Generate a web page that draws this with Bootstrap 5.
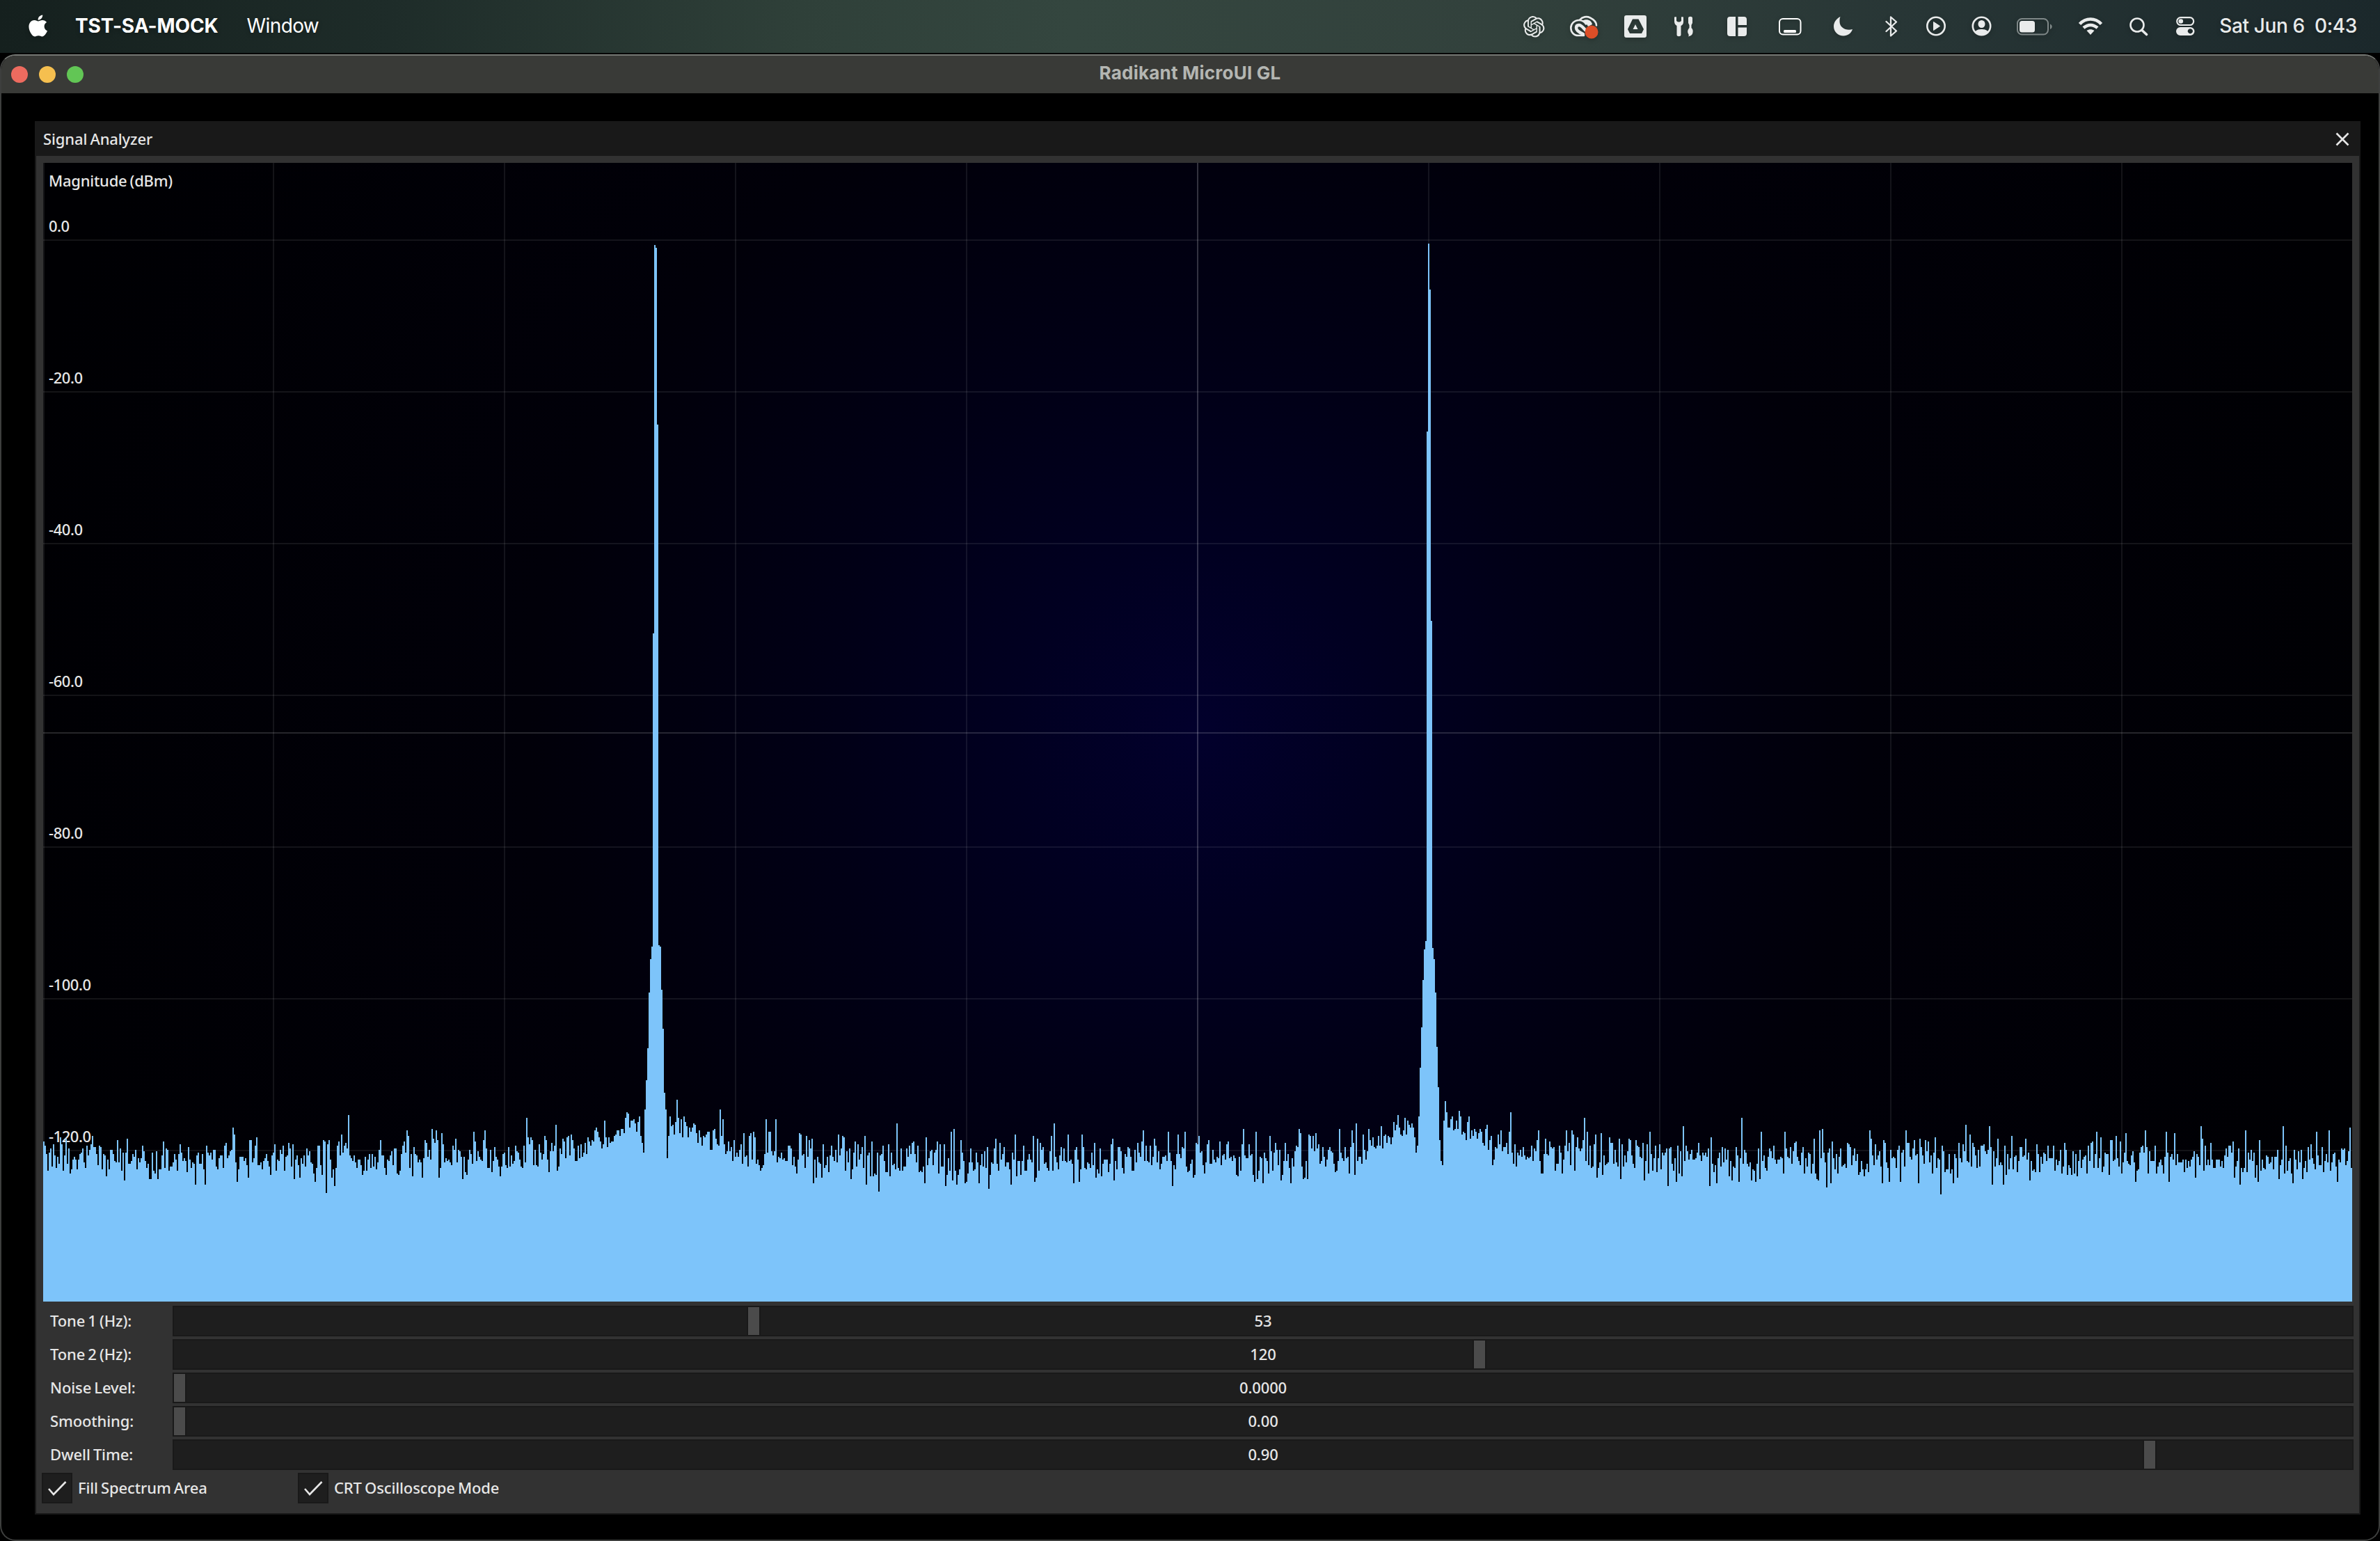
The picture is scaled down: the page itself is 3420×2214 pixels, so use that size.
<!DOCTYPE html>
<html lang="en" data-bs-theme="dark">
<head>
<meta charset="utf-8">
<title>Radikant MicroUI GL</title>
<link href="https://cdn.jsdelivr.net/npm/bootstrap@5.3.0/dist/css/bootstrap.min.css" rel="stylesheet">
<style>
  body { width: 3420px; height: 2214px; background: #000; overflow: hidden; font-family: Inter, "Liberation Sans", sans-serif; }
  .menubar { height: 76px; padding: 0 33px 0 37px; background: linear-gradient(90deg, #15201e 0, #1e2c29 560px, #2f4039 1150px, #34463f 1540px, #32413c 2160px, #273535 2780px, #1b282b 3420px); color: #fff; font-size: 28px; line-height: 1; text-shadow: 0 2px 6px rgba(0,0,0,.25); }
  .menubar span { padding-bottom: 3px; }
  .menubar svg { display: block; flex: none; overflow: visible; fill: #e9ebeb; filter: drop-shadow(0 2px 3px rgba(0,0,0,.25)); }
  .menubar svg .ln { fill: none; stroke: #e9ebeb; stroke-width: 2.6; stroke-linecap: round; stroke-linejoin: round; }
  .apple { margin-right: 35px; }
  .appname { font-weight: 700; letter-spacing: -.12px; margin-right: 41px; }
  .menu-item { letter-spacing: -.6px; }
  .clock { color: #e9ebeb; font-weight: 500; white-space: pre; letter-spacing: -.37px; margin-left: -1px; }
  .os-window { margin-top: 2px; height: 2136px; border: 2px solid #3e3f3e; border-top-color: #757874; border-radius: 22px; background: #000; overflow: hidden; }
  .titlebar { height: 54px; background: #393a37; color: #b4b6b2; font-size: 26px; font-weight: 700; line-height: 1; }
  .window-name { padding-bottom: 4px; letter-spacing: .22px; }
  .lights { width: 160px; padding-left: 14px; gap: 16px; }
  .lights i { width: 24px; height: 24px; border-radius: 50%; }
  .light-close { background: #ed6b5f; }
  .light-min { background: #f5bf4f; }
  .light-max { background: #62c655; }
  .panel { margin: 40px 26px 0 48px; height: 2002px; border: 2px solid #191919; background: #323232; color: #e6e6e6; font: 500 22px/1 "Noto Sans", "Open Sans", sans-serif; word-spacing: -1.4px; letter-spacing: -.13px; }
  .panel span:not(.tick) { padding-bottom: 2px; }
  .panel-title { height: 48px; background: #191919; padding: 0 14px 0 10px; }
  .plot { display: block; margin: 10px 0 6px 10px; }
  .plot text { font-size: 22px; fill: #e6e6e6; }
  .controls { padding: 0 8px 0 20px; gap: 4px; }
  .slider-label { width: 176px; }
  .slider { height: 44px; border: 2px solid #191919; background: #1e1e1e; }
  .slider > * { grid-area: 1 / 1; }
  .thumb { width: 20px; height: 40px; margin-left: calc((100% - 16px) * var(--v) - 2px); background: #4b4b4b; border: solid #191919; border-width: 0 2px; }
  .checks { padding: 4px 8px 0; }
  .checks > div { width: 368px; gap: 8px; }
  .tick { width: 44px; height: 44px; border: 2px solid #191919; background: #1e1e1e; }
  .tick svg, .closer { fill: none; stroke: #e6e6e6; stroke-width: 2.6; }
</style>
<script src="https://cdn.jsdelivr.net/npm/bootstrap@5.3.0/dist/js/bootstrap.bundle.min.js"></script>
</head>
<body>
<nav class="menubar d-flex align-items-center">
  <svg class="apple" width="36" height="76"><path transform="translate(1.4 21.5) scale(1.36 1.29)" fill="#fff" d="M12.152 6.896c-.948 0-2.415-1.078-3.96-1.04-2.04.027-3.91 1.183-4.961 3.014-2.117 3.675-.546 9.103 1.519 12.09 1.013 1.454 2.208 3.09 3.792 3.039 1.52-.065 2.09-.987 3.935-.987 1.831 0 2.35.987 3.96.948 1.637-.026 2.676-1.48 3.676-2.948 1.156-1.688 1.636-3.325 1.662-3.415-.039-.013-3.182-1.221-3.22-4.857-.026-3.04 2.48-4.494 2.597-4.559-1.429-2.09-3.623-2.324-4.39-2.376-2-.156-3.675 1.09-4.61 1.09zM15.53 3.83c.843-1.012 1.4-2.427 1.245-3.83-1.207.052-2.662.805-3.532 1.818-.78.896-1.454 2.338-1.273 3.714 1.338.104 2.715-.688 3.559-1.701"/></svg>
  <span class="appname">TST-SA-MOCK</span>
  <span class="menu-item">Window</span>
  <div class="d-flex align-items-center ms-auto">
    <svg width="67" height="76"><path transform="translate(0 23) scale(1.27)" d="M22.2819 9.8211a5.9847 5.9847 0 0 0-.5157-4.9108 6.0462 6.0462 0 0 0-6.5098-2.9A6.0651 6.0651 0 0 0 4.9807 4.1818a5.9847 5.9847 0 0 0-3.9977 2.9 6.0462 6.0462 0 0 0 .7427 7.0966 5.98 5.98 0 0 0 .511 4.9107 6.051 6.051 0 0 0 6.5146 2.9001A5.9847 5.9847 0 0 0 13.2599 24a6.0557 6.0557 0 0 0 5.7718-4.2058 5.9894 5.9894 0 0 0 3.9977-2.9001 6.0557 6.0557 0 0 0-.7475-7.0729zm-9.022 12.6081a4.4755 4.4755 0 0 1-2.8764-1.0408l.1419-.0804 4.7783-2.7582a.7948.7948 0 0 0 .3927-.6813v-6.7369l2.02 1.1686a.071.071 0 0 1 .038.052v5.5826a4.504 4.504 0 0 1-4.4945 4.4944zm-9.6607-4.1254a4.4708 4.4708 0 0 1-.5346-3.0137l.142.0852 4.783 2.7582a.7712.7712 0 0 0 .7806 0l5.8428-3.3685v2.3324a.0804.0804 0 0 1-.0332.0615L9.74 19.9502a4.4992 4.4992 0 0 1-6.1408-1.6464zM2.3408 7.8956a4.485 4.485 0 0 1 2.3655-1.9728V11.6a.7664.7664 0 0 0 .3879.6765l5.8144 3.3543-2.0201 1.1685a.0757.0757 0 0 1-.071 0l-4.8303-2.7865A4.504 4.504 0 0 1 2.3408 7.872zm16.5963 3.8558L13.1038 8.364 15.1192 7.2a.0757.0757 0 0 1 .071 0l4.8303 2.7913a4.4944 4.4944 0 0 1-.6765 8.1042v-5.6772a.79.79 0 0 0-.407-.667zm2.0107-3.0231l-.142-.0852-4.7735-2.7818a.7759.7759 0 0 0-.7854 0L9.409 9.2297V6.8974a.0662.0662 0 0 1 .0284-.0615l4.8303-2.7866a4.4992 4.4992 0 0 1 6.6802 4.66zM8.3065 12.863l-2.02-1.1638a.0804.0804 0 0 1-.038-.0567V6.0742a4.4992 4.4992 0 0 1 7.3757-3.4537l-.142.0805L8.704 5.459a.7948.7948 0 0 0-.3927.6813zm1.0976-2.3654l2.602-1.4998 2.6069 1.4998v2.9994l-2.5974 1.4997-2.6067-1.4997Z"/></svg>
    <svg width="78" height="76"><g class="ln"><path d="M14 28.5C18 24 24 23 29 25.5c5 2.500 9 6 9 11"/><path d="M20 51H12C5 51 1.300 45.500 1.300 40S6 29 13 29c5 0 8 2.500 10 5.500"/><path style="stroke-width:4.500" d="M19 49c-7-3-10-5.500-10-9 0-3 2-4 4-4 3.500 0 6 4 9.500 7.500"/></g><path d="M17 30c7-4 14-1 15 5l-6 3c-2-4-5-6-9-8z"/><circle cx="31" cy="46" r="9.500" fill="#dd4e27"/></svg>
    <svg width="72" height="76"><path fill-rule="evenodd" d="M3 22h26a3 3 0 0 1 3 3v26a3 3 0 0 1-3 3H3a3 3 0 0 1-3-3V25a3 3 0 0 1 3-3zM12 27.500L5 42l3 6h17l3-6-7.500-14.500zM16 35l3.500 7h-7z"/></svg>
    <svg width="76" height="76"><path d="M0 24.500c0 0 2-.8 3 0v5.500l2 1.500h3l2-1.500v-5.500c1-.8 3 0 3 0v7c0 3-1.500 4.500-3.500 5.500v13c0 3-6 3-6 0V37C1.500 36 0 34 0 31zM20 26c0-3 6-3 6 0v7l-1.500 3v4c2 2 2.500 4 2 6.500-.3 3-2 5-6.500 6 1.500-2 .5-3-.5-5-1-2.500 0-5.500 2-7.500v-4L20 33z"/></svg>
    <svg width="74" height="76"><path d="M4 24h8v28H4a4 4 0 0 1-4-4V28a4 4 0 0 1 4-4zM15.500 24H24a4 4 0 0 1 4 4v8H15.500zM15.500 39.500H28V48a4 4 0 0 1-4 4h-8.500z"/></svg>
    <svg width="79" height="76"><rect class="ln" x="1" y="27" width="30.500" height="22.500" rx="5" style="stroke:#fff;stroke-width:2"/><rect x="7" y="43" width="18" height="4" rx="1.500" fill="#fff"/></svg>
    <svg width="74" height="76"><path d="M9.500 24C4 26.500 0 32 0 38c0 7.500 6 13.500 14 13.500 6 0 11-3.500 13-9.500C18 44.500 8.500 40 8.500 31c0-3 0-4.500 1-7z"/></svg>
    <svg width="59" height="76"><path class="ln" style="stroke-width:2.300" d="M1.500 31l14.500 13.500-8 7V24.500l8 7L1.500 45"/></svg>
    <svg width="65" height="76"><circle class="ln" cx="14" cy="37.500" r="12.700"/><path d="M10.500 31.500l9 6-9 6z" stroke="#e9ebeb" stroke-linejoin="round"/></svg>
    <svg width="65" height="76"><circle class="ln" cx="14.500" cy="37.500" r="12.700"/><ellipse cx="14.500" cy="34.500" rx="5" ry="5.600"/><path d="M5 46c2-3.500 6-4 9.500-4s7.500.5 9.500 4c-5 6-14 6-19 0z"/></svg>
    <svg width="89" height="76"><rect class="ln" x="1" y="27" width="44" height="22.500" rx="6.500" style="stroke:#7f8888;stroke-width:2"/><rect x="4" y="30" width="22" height="16.500" rx="3.500"/><path d="M48 34.500c3.500 1.500 3.500 6 0 7.500z" fill="#7f8888"/></svg>
    <svg width="73" height="76"><g class="ln" style="stroke-width:4.500;stroke-linecap:butt"><path style="stroke-width:4.500" d="M1.500 34.500C10 25 24 25 32.500 34.500"/><path style="stroke-width:4.500" d="M7 40c6-5.500 14-5.500 20 0"/></g><path d="M11.500 44c3.500-2.500 7.500-2.500 11 0L17 50z"/></svg>
    <svg width="67" height="76"><ellipse class="ln" cx="11" cy="36" rx="9.500" ry="9.500"/><path class="ln" style="stroke-width:3.600" d="M18 43.500l6.500 6"/></svg>
    <svg width="63" height="76"><rect class="ln" x="1.200" y="25.200" width="24" height="10.800" rx="5.400" style="stroke-width:2.200"/><circle cx="6.800" cy="30.500" r="3.300"/><path fill-rule="evenodd" d="M6 39h14.500a6 6 0 0 1 0 12H6a6 6 0 0 1 0-12zM20.300 41.200a3.600 3.600 0 1 0 .1 0z"/></svg>
    <span class="clock">Sat Jun 6  0:43</span>
  </div>
</nav>

<main class="os-window">
  <header class="titlebar d-flex align-items-center">
    <div class="lights d-flex"><i class="light-close"></i><i class="light-min"></i><i class="light-max"></i></div>
    <div class="window-name flex-grow-1 text-center">Radikant MicroUI GL</div>
    <div class="lights"></div>
  </header>

  <section class="panel">
    <div class="panel-title d-flex align-items-center justify-content-between">
      <span>Signal Analyzer</span>
      <svg class="closer" width="20" height="20"><path d="M1.500 1.500l17 17M18.500 1.500l-17 17"/></svg>
    </div>

    <svg class="plot" width="3318" height="1636" viewBox="62 234 3318 1636">
      <defs>
        <radialGradient id="glow" gradientUnits="userSpaceOnUse" cx="1721" cy="1052" r="1750">
          <stop offset="0" stop-color="#02002c"/><stop offset=".15" stop-color="#010021"/><stop offset=".31" stop-color="#010016"/><stop offset=".55" stop-color="#010009"/><stop offset="1" stop-color="#000003"/>
        </radialGradient>
      </defs>
      <rect x="62" y="234" width="3318" height="1636" fill="url(#glow)"/>
      <g id="grid" fill="#fff"></g>
      <g id="axis"></g>
      <path id="trace" fill="#7dc4fa" shape-rendering="crispEdges"/>
    </svg>

    <div class="controls d-flex flex-column">
      <div class="d-flex align-items-center"><span class="slider-label">Tone 1 (Hz):</span><div class="slider flex-grow-1 d-grid align-items-center"><div class="thumb" style="--v:.265"></div><span class="text-center">53</span></div></div>
      <div class="d-flex align-items-center"><span class="slider-label">Tone 2 (Hz):</span><div class="slider flex-grow-1 d-grid align-items-center"><div class="thumb" style="--v:.6"></div><span class="text-center">120</span></div></div>
      <div class="d-flex align-items-center"><span class="slider-label">Noise Level:</span><div class="slider flex-grow-1 d-grid align-items-center"><div class="thumb" style="--v:0"></div><span class="text-center">0.0000</span></div></div>
      <div class="d-flex align-items-center"><span class="slider-label">Smoothing:</span><div class="slider flex-grow-1 d-grid align-items-center"><div class="thumb" style="--v:0"></div><span class="text-center">0.00</span></div></div>
      <div class="d-flex align-items-center"><span class="slider-label">Dwell Time:</span><div class="slider flex-grow-1 d-grid align-items-center"><div class="thumb" style="--v:.909"></div><span class="text-center">0.90</span></div></div>
    </div>

    <div class="checks d-flex">
      <div class="d-flex align-items-center"><span class="tick"><svg width="40" height="40" class="d-block"><path d="M8 21l7 8L32.500 11"/></svg></span><span>Fill Spectrum Area</span></div>
      <div class="d-flex align-items-center"><span class="tick"><svg width="40" height="40" class="d-block"><path d="M8 21l7 8L32.500 11"/></svg></span><span>CRT Oscilloscope Mode</span></div>
    </div>
  </section>
</main>

<script>
const STEP = 2, BASE = 1300, LEFT = 62, RIGHT = 3380, BOTTOM = 1870;

// Recorded sweep: tops of the 2px bins, in 2px steps below BASE, keyed by the first bin's x.
const sweep = {
  62: [170,173,179,191,178,175,188,172,180,189,181,186,167,172,191,180,168,186,175,193,190,183,181,183,190,183,179,178,175,185,189,173,180,176,172,166,174,174,179,187,173,174,190,179,180,195,183,190,176,176,179,184,185,169,185,175,191,178,198,178,168,186,186,184,179,181,176,190,182,185,182,173,177,184,189,186,197,197,178,191,193,177,197,190,190,180,170,189,175,176,191,188,188,185,179,183,191,179,172,178,184,182,184,192,174,183,189,185,186,201,180,178,186,186,179,190,201,173,178,180,178,183,176,176,188,190,182,180,180,189,173,171,182,180,177,176,160,165,185,199,190,181,181,181,184,182,187,196,169,169,185,182,173,167,187,187,185,190,184,182,179,184,188,194,180,178,172,191,183,184,176,179,173,191,181,180,171,175,188,172,197,183,180,187,196,182,186,180,188,175,180,177,185,186,193,199,189,173,173,187,194,169,170,207,172,169,183,196,190,202,189,173,170,180,165,178,173,171,175,151,180,182,184,180,185,189,183,183,187,194,191,181,191,183,179,189,179,188,181,190,185,176,169,180,180,189,194,183,184,180,177,187,175,175,193,194,191,179,173,170,178,162,166,189,179,195,174,179,180,185,183,185,196,182,169,171,181,176,183,161,168,171,162,169,196,189,164,172,185,182,184,183,185,187,173,176,168,185,176,177,181,197,181,192,194,183,176,179,186,163,170,184,177,181,183,184,169,162,175,189,189,176,192,184,174,181,183,188,195,188,179,178,187,189,174,188,180,186,184,173,177,178,183,188,189,173,185,153,167,172,167,169,187,176,187,188,172,178,183,179,166,169,183,192,177,171,177,173,158],
  840: [171,179,167,170,173,169,170,162,160,163,167,170,175,172,155,167,174,167,171,170,170,166,165,162,162,166,161,161,164,153,149,150,160,155,155,154,157,163,156,152,166,171,178,147,126,103,63,39,30,-195,-474,-472,-345,29,30,61,89,135,147,182,166,152,159,158,165,156,140,153,164,154,167,152,156,159,167,160,163,160,157,158,164,171,162,167,173,166,167,165,163,163,176,176,162,161,168,172,173,147,166,154,172,179,177,170,177,174,184,169,181,178,181,176,172,186,164,181,180,188,166,164,183,163,167,186,183,187,191,189,187,179,154,178,163,163,177,180,177,154,185,181,182,178,183,182,184,184,173,173,175,187,181,188,193,183,164,165,180,179,189,166,181,169,175,168,200,183,196,181,185,186,196,172,189,187,181,192,180,173,181,184,176,185,165,180,175,166,167,191,177,185,175,197,190,178,170,188,172,183,179,174],
  1960: [176,183,177,161,169,173,167,174,175,173,166,173,159,175,166,165,171,166,167,172,167,156,162,158,151,160,165,166,162,153,165,155,158,160,157,160,167,178,173,152,117,88,54,32,26,-340,-475,-442,-204,31,39,63,102,131,169,184,187,155,141,149,160,160,154,152,162,161,155,161,148,152,165,163,164,169,156,152,168,162,166,161,163,168,164,161,163,171,173,161,158,176,169,166,187,183,174,175,165,172,162,177,174,174,171,179,163,149,178,186,172,188,178,180,176,181,174,180,183,181,182,181,173,184,175,177,169,162,184,193,193,179,168,179,180,170,174,175,174,191,186,186,173,178,193,183,173,162,177,171,187,162,165,191,174,167,175,177,175,169,153,184,163,187,173,189,188,172,165,196,189,185,164,194,180,187,186,185,167,171,171,186,176,185,188,168,197,172,188,180,185,177,168,169,180,186,189,169,173,174,181,182]
};
// Single bins that stand out of the noise floor.
const marks = { 1288:157, 1370:161, 1430:168, 1514:157, 1642:162, 1722:166, 1786:161, 1420:204, 2370:163, 2418:159, 2502:153, 2530:163, 2618:161, 2738:162, 2858:159, 2890:166, 3082:162, 3124:164, 3280:159, 3346:162, 3376:160, 2624:203, 2788:208, 2612:198 };

let seed = 53120;
const rnd = () => ((seed = (seed * 1664525 + 1013904223) >>> 0) / 4294967296);
const tops = [];
for (let x = LEFT; x < RIGHT; x += STEP) {
  const skirt = x > 1840 && x < 1960 ? (x - 1840) / 18 : x > 800 && x < 840 ? 8 : 0;
  tops.push(Math.round(183 - skirt + (rnd() + rnd() + rnd() - 1.5) * 17 - (rnd() < .06 ? 8 : 0)));
}
for (const [x0, bins] of Object.entries(sweep)) bins.forEach((v, i) => { tops[(x0 - LEFT) / STEP + i] = v; });
for (const [x, v] of Object.entries(marks)) tops[(x - LEFT) / STEP] = v;

let d = `M${LEFT} ${BOTTOM}`;
tops.forEach(v => { d += `V${BASE + v * 2}h${STEP}`; });
document.getElementById('trace').setAttribute('d', d + `V${BOTTOM}Z`);

let g = '';
for (let k = 0; k < 10; k++) g += `<rect x="${k ? 60 + 332 * k : 62}" y="234" width="2" height="1636" opacity="${k === 5 ? .2 : .08}"/>`;
for (let k = 0; k < 7; k++) g += `<rect x="62" y="${344 + 218 * k}" width="3318" height="2" opacity=".08"/>`;
g += '<rect x="62" y="1052" width="3318" height="2" opacity=".15"/>';
document.getElementById('grid').innerHTML = g;

let t = '<text x="70" y="268" textLength="178">Magnitude (dBm)</text>';
[30, 49, 49, 49, 49, 61, 61].forEach((w, k) => {
  t += `<text x="70" y="${333 + 218 * k}" textLength="${w}">${k ? -20 * k : 0}.0</text>`;
});
document.getElementById('axis').innerHTML = t;
</script>
</body>
</html>
